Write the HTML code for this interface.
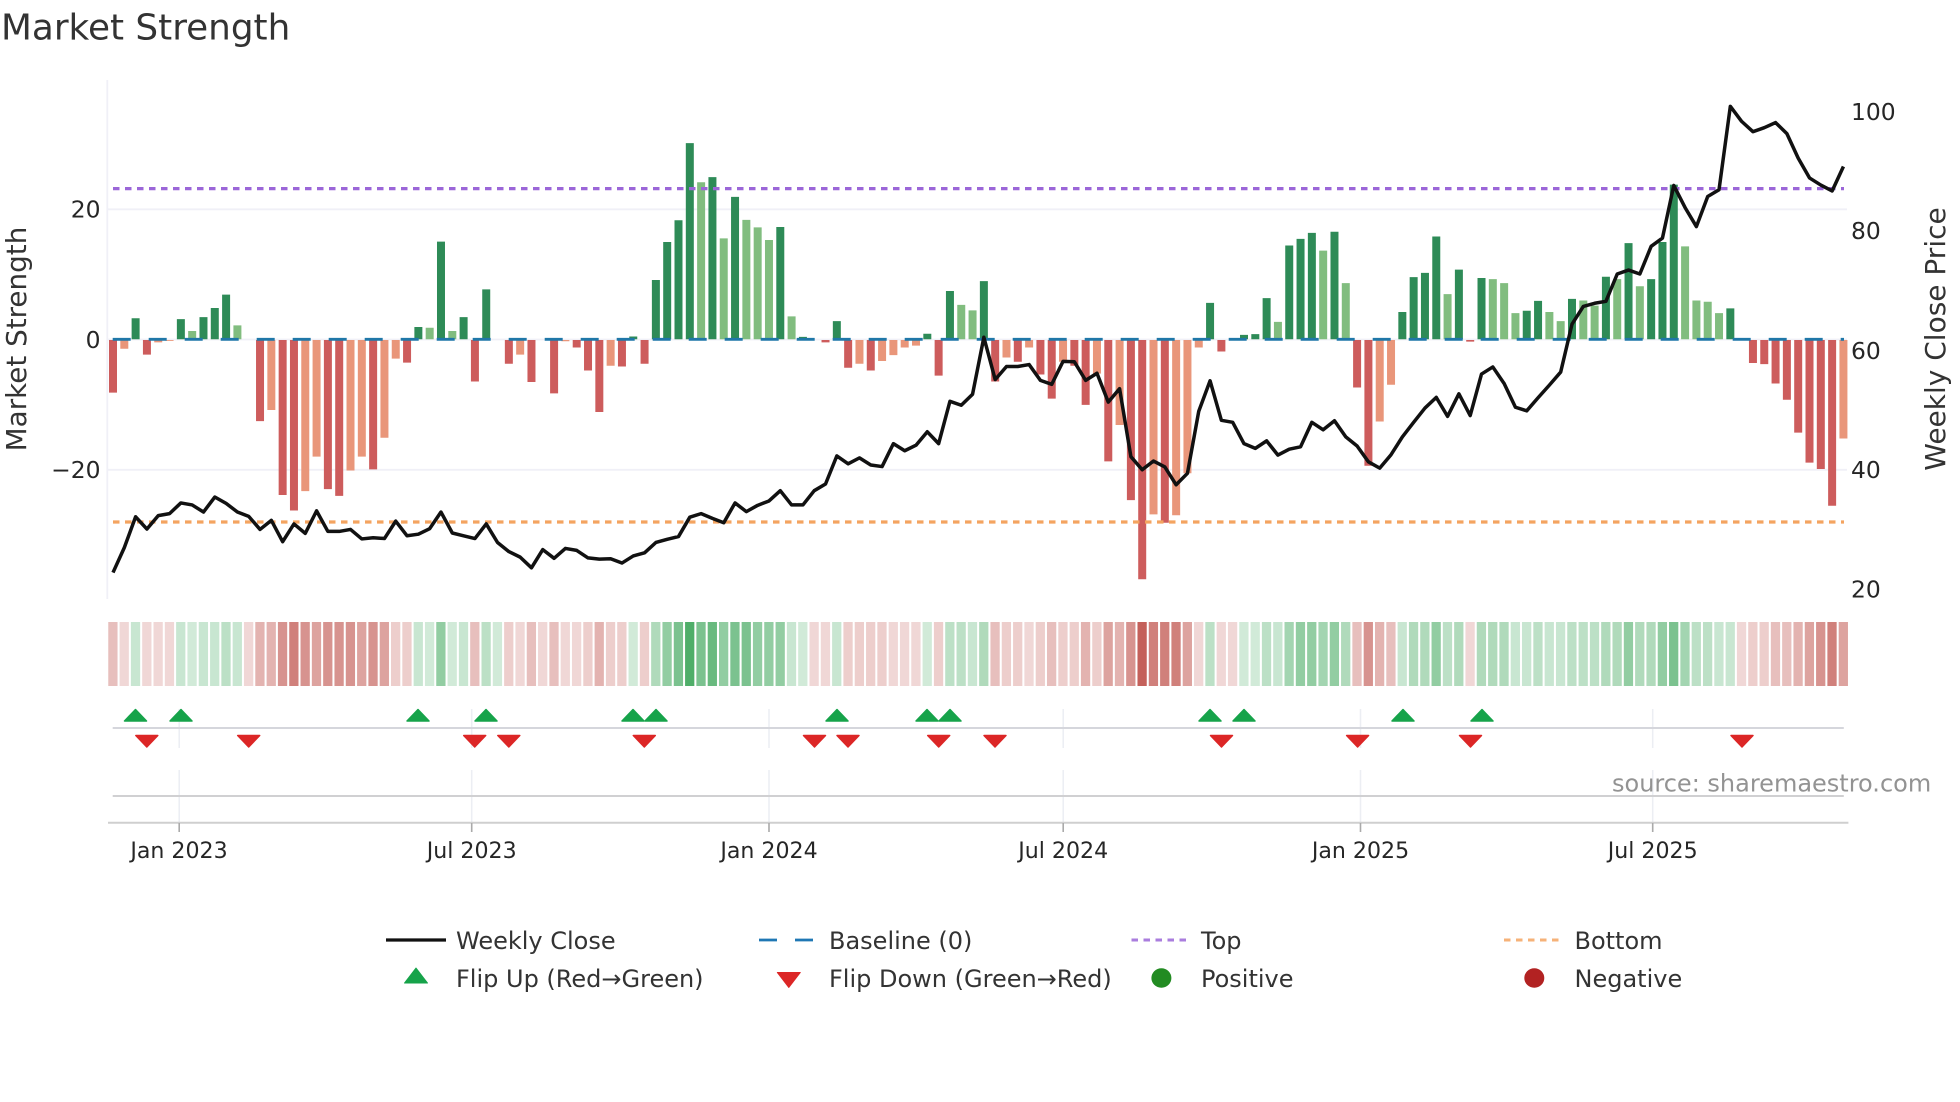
<!DOCTYPE html>
<html lang="en"><head><meta charset="utf-8"><title>Market Strength</title>
<style>
html,body{margin:0;padding:0;background:#fff;width:1960px;height:1102px;overflow:hidden}
svg{display:block}
text{font-family:"DejaVu Sans","Liberation Sans",sans-serif}
</style></head><body>
<svg xmlns="http://www.w3.org/2000/svg" width="1960" height="1102" viewBox="0 0 1960 1102">
<rect width="1960" height="1102" fill="#fff"/>
<text x="1" y="39.5" font-size="35.8" fill="#333">Market Strength</text>

<!-- grid -->
<g stroke="#f0f0f7" stroke-width="1.8" fill="none">
<path d="M107.3 80V599"/>
<path d="M107 209.3H1847M107 339.5H1847M107 469.8H1847"/>
</g>

<!-- bars -->
<g transform="translate(113 0) scale(11.31 .3954)" fill="none" stroke-width=".707">
<path stroke="#2e8b57" d="M2 858V805M6 858V807M8 858V802M9 858V779M10 858V745M27 858V827M29 858V611M31 858V802M33 858V732M46 858V851M48 858V708M49 858V612M50 858V557M51 858V362M53 858V448M55 858V498M59 858V574M61 858V852M64 858V812M72 858V844M74 858V736M77 858V711M97 858V766M100 858V847M101 858V845M102 858V754M104 858V621M105 858V604M106 858V589M108 858V586M114 858V789M115 858V701M116 858V690M117 858V598M119 858V682M121 858V703M125 858V786M126 858V761M129 858V756M132 858V700M134 858V615M136 858V706M137 858V612M138 858V467M143 858V780"/>
<path stroke="#81bd7f" d="M7 858V837M11 858V823M28 858V829M30 858V837M52 858V461M54 858V603M56 858V556M57 858V575M58 858V607M60 858V800M75 858V771M76 858V785M103 858V814M107 858V634M109 858V716M118 858V744M122 858V706M123 858V716M124 858V792M127 858V789M128 858V812M130 858V760M131 858V773M133 858V706M135 858V724M139 858V623M140 858V760M141 858V763M142 858V792"/>
<path stroke="#cd5c5c" d="M0 860V993M3 860V897M13 860V1065M15 860V1252M16 860V1291M19 860V1237M20 860V1254M23 860V1187M26 860V917M32 860V965M35 860V920M37 860V966M39 860V995M41 860V879M42 860V937M43 860V1042M45 860V927M47 860V920M63 860V866M65 860V930M67 860V937M73 860V950M78 860V965M80 860V915M82 860V947M83 860V1008M85 860V925M86 860V1024M88 860V1167M90 860V1265M91 860V1465M93 860V1322M98 860V889M110 860V980M111 860V1178M120 860V864M145 860V918M146 860V921M147 860V970M148 860V1011M149 860V1094M150 860V1170M151 860V1186M152 860V1279"/>
<path stroke="#e9967a" d="M1 860V882M4 860V866M5 860V862M14 860V1037M17 860V1242M18 860V1155M21 860V1190M22 860V1155M24 860V1107M25 860V907M36 860V897M40 860V863M44 860V925M66 860V920M68 860V913M69 860V898M70 860V879M71 860V874M79 860V904M81 860V879M84 860V915M87 860V945M89 860V1075M92 860V1301M94 860V1303M95 860V1197M96 860V879M112 860V1066M113 860V973M153 860V1109"/>
</g>

<!-- baseline / top / bottom -->
<path d="M112.7 339.3H1844" stroke="#1f77a8" stroke-width="2.8" stroke-dasharray="18 18" fill="none"/>
<path d="M113 188.6H1844" stroke="#9b66d8" stroke-width="3.2" stroke-dasharray="6.5 5.5" fill="none"/>
<path d="M113 522H1844" stroke="#f4a460" stroke-width="3.2" stroke-dasharray="6.5 5.5" fill="none"/>

<!-- price line -->
<g transform="translate(113 0) scale(11.31 .3954)">
<polyline fill="none" stroke="#111" stroke-width="3.5" stroke-linejoin="round" vector-effect="non-scaling-stroke" points="0,1448 1,1385 2,1307 3,1338 4,1304 5,1299 6,1272 7,1277 8,1295 9,1257 10,1273 11,1295 12,1306 13,1339 14,1316 15,1370 16,1325 17,1349 18,1292 19,1344 20,1344 21,1339 22,1363 23,1360 24,1362 25,1318 26,1355 27,1351 28,1337 29,1295 30,1348 31,1355 32,1362 33,1325 34,1372 35,1395 36,1409 37,1436 38,1390 39,1412 40,1387 41,1392 42,1411 43,1414 44,1413 45,1424 46,1406 47,1398 48,1372 49,1364 50,1357 51,1308 52,1299 53,1311 54,1322 55,1272 56,1294 57,1278 58,1267 59,1241 60,1277 61,1277 62,1241 63,1224 64,1153 65,1173 66,1158 67,1176 68,1180 69,1122 70,1140 71,1126 72,1092 73,1122 74,1015 75,1025 76,997 77,853 78,960 79,927 80,927 81,922 82,962 83,972 84,914 85,915 86,962 87,944 88,1017 89,983 90,1155 91,1188 92,1166 93,1181 94,1226 95,1197 96,1040 97,963 98,1063 99,1068 100,1122 101,1134 102,1115 103,1151 104,1136 105,1130 106,1068 107,1087 108,1064 109,1105 110,1128 111,1168 112,1184 113,1150 114,1105 115,1068 116,1032 117,1005 118,1053 119,996 120,1051 121,946 122,928 123,970 124,1030 125,1039 126,1006 127,974 128,941 129,820 130,775 131,767 132,762 133,693 134,683 135,693 136,623 137,602 138,469 139,525 140,573 141,497 142,480 143,269 144,307 145,333 146,323 147,310 148,338 149,400 150,450 151,468 152,483 153,421"/>
</g>

<!-- axis labels -->
<g font-size="23.4" fill="#262626">
<text x="100.5" y="217.6" text-anchor="end">20</text>
<text x="100.5" y="347.9" text-anchor="end">0</text>
<text x="100.5" y="478.2" text-anchor="end">−20</text>
<text x="1851" y="119.8">100</text>
<text x="1851" y="238.8">80</text>
<text x="1851" y="359">60</text>
<text x="1851" y="478.1">40</text>
<text x="1851" y="597.3">20</text>
</g>
<text transform="translate(26 339) rotate(-90)" text-anchor="middle" font-size="27.8" fill="#333">Market Strength</text>
<text transform="translate(1945 339) rotate(-90)" text-anchor="middle" font-size="28" fill="#333">Weekly Close Price</text>

<!-- heat strip -->
<g transform="translate(112.9 0) scale(11.31 1)" fill="none" stroke-width=".82">
<path stroke="#c4605a" stroke-opacity=".25" d="M1 622v64M3 622v64M4 622v64M5 622v64M12 622v64M36 622v64M38 622v64M40 622v64M41 622v64M62 622v64M63 622v64M69 622v64M70 622v64M71 622v64M81 622v64M96 622v64M98 622v64M99 622v64M120 622v64M144 622v64"/>
<path stroke="#c4605a" stroke-opacity=".31" d="M25 622v64M26 622v64M35 622v64M42 622v64M44 622v64M45 622v64M47 622v64M65 622v64M66 622v64M67 622v64M68 622v64M73 622v64M79 622v64M80 622v64M82 622v64M84 622v64M85 622v64M87 622v64M145 622v64M146 622v64"/>
<path stroke="#c4605a" stroke-opacity=".4" d="M0 622v64M32 622v64M37 622v64M39 622v64M78 622v64M83 622v64M110 622v64M113 622v64M147 622v64M148 622v64"/>
<path stroke="#c4605a" stroke-opacity=".48" d="M13 622v64M14 622v64M43 622v64M86 622v64M89 622v64M112 622v64M149 622v64"/>
<path stroke="#c4605a" stroke-opacity=".58" d="M18 622v64M22 622v64M24 622v64M88 622v64M95 622v64M150 622v64M153 622v64"/>
<path stroke="#c4605a" stroke-opacity=".68" d="M15 622v64M17 622v64M19 622v64M20 622v64M21 622v64M23 622v64M90 622v64M111 622v64M151 622v64"/>
<path stroke="#c4605a" stroke-opacity=".8" d="M16 622v64M92 622v64M93 622v64M94 622v64M152 622v64"/>
<path stroke="#c4605a" d="M91 622v64"/>
<path stroke="#4fae69" stroke-opacity=".26" d="M7 622v64M28 622v64M30 622v64M34 622v64M46 622v64M61 622v64M72 622v64M100 622v64M101 622v64"/>
<path stroke="#4fae69" stroke-opacity=".31" d="M2 622v64M6 622v64M8 622v64M9 622v64M11 622v64M27 622v64M31 622v64M60 622v64M64 622v64M76 622v64M103 622v64M114 622v64M124 622v64M125 622v64M127 622v64M128 622v64M142 622v64M143 622v64"/>
<path stroke="#4fae69" stroke-opacity=".38" d="M10 622v64M33 622v64M74 622v64M75 622v64M97 622v64M102 622v64M118 622v64M126 622v64M129 622v64M130 622v64M131 622v64M140 622v64M141 622v64"/>
<path stroke="#4fae69" stroke-opacity=".45" d="M48 622v64M77 622v64M109 622v64M115 622v64M116 622v64M119 622v64M121 622v64M122 622v64M123 622v64M132 622v64M133 622v64M135 622v64M136 622v64"/>
<path stroke="#4fae69" stroke-opacity=".52" d="M104 622v64M107 622v64M139 622v64"/>
<path stroke="#4fae69" stroke-opacity=".62" d="M29 622v64M49 622v64M54 622v64M57 622v64M58 622v64M59 622v64M105 622v64M106 622v64M108 622v64M117 622v64M134 622v64M137 622v64"/>
<path stroke="#4fae69" stroke-opacity=".75" d="M50 622v64M52 622v64M55 622v64M56 622v64M138 622v64"/>
<path stroke="#4fae69" stroke-opacity=".85" d="M53 622v64"/>
<path stroke="#4fae69" d="M51 622v64"/>
</g>

<!-- lower panels -->
<g stroke="#eceef3" stroke-width="1.5" fill="none">
<path d="M179.2 709V748M471.7 709V748M769 709V748M1063.2 709V748M1360.5 709V748M1652.7 709V748"/>
<path d="M179.2 770V822M471.7 770V822M769 770V822M1063.2 770V822M1360.5 770V822M1652.7 770V822"/>
</g>
<path d="M112.7 728H1843.8" stroke="#d5d6dc" stroke-width="2" fill="none"/>
<path d="M112.7 796H1843.8" stroke="#d0d0d2" stroke-width="2" fill="none"/>
<path d="M108 822.7H1848.4" stroke="#cfcfcf" stroke-width="2" fill="none"/>
<path d="M179.2 823V832M471.7 823V832M769 823V832M1063.2 823V832M1360.5 823V832M1652.7 823V832" stroke="#aaa" stroke-width="1.6" fill="none"/>

<!-- flip up -->
<g fill="#16a34a" stroke="#16a34a" stroke-width="1.5" stroke-linejoin="round">
<polygon points="135.5,709.5 124.5,721 146.5,721"/>
<polygon points="181,709.5 170,721 192,721"/>
<polygon points="418,709.5 407,721 429,721"/>
<polygon points="486,709.5 475,721 497,721"/>
<polygon points="633,709.5 622,721 644,721"/>
<polygon points="656,709.5 645,721 667,721"/>
<polygon points="837,709.5 826,721 848,721"/>
<polygon points="927,709.5 916,721 938,721"/>
<polygon points="950,709.5 939,721 961,721"/>
<polygon points="1210,709.5 1199,721 1221,721"/>
<polygon points="1244,709.5 1233,721 1255,721"/>
<polygon points="1403,709.5 1392,721 1414,721"/>
<polygon points="1482,709.5 1471,721 1493,721"/>
</g>
<!-- flip down -->
<g fill="#dc2626" stroke="#dc2626" stroke-width="1.5" stroke-linejoin="round">
<polygon points="146.8,747 135.8,735.5 157.8,735.5"/>
<polygon points="248.7,747 237.7,735.5 259.7,735.5"/>
<polygon points="474.7,747 463.7,735.5 485.7,735.5"/>
<polygon points="508.8,747 497.8,735.5 519.8,735.5"/>
<polygon points="644.3,747 633.3,735.5 655.3,735.5"/>
<polygon points="814.5,747 803.5,735.5 825.5,735.5"/>
<polygon points="848,747 837,735.5 859,735.5"/>
<polygon points="938.7,747 927.7,735.5 949.7,735.5"/>
<polygon points="995,747 984,735.5 1006,735.5"/>
<polygon points="1221.5,747 1210.5,735.5 1232.5,735.5"/>
<polygon points="1357.6,747 1346.6,735.5 1368.6,735.5"/>
<polygon points="1470.5,747 1459.5,735.5 1481.5,735.5"/>
<polygon points="1742,747 1731,735.5 1753,735.5"/>
</g>

<!-- x labels -->
<g font-size="22.1" fill="#262626" text-anchor="middle">
<text x="179" y="858">Jan 2023</text>
<text x="471.7" y="858">Jul 2023</text>
<text x="769" y="858">Jan 2024</text>
<text x="1063.2" y="858">Jul 2024</text>
<text x="1360.5" y="858">Jan 2025</text>
<text x="1652.7" y="858">Jul 2025</text>
</g>
<text x="1612" y="791.5" font-size="24" fill="#939393">source: sharemaestro.com</text>

<!-- legend -->
<path d="M386 940H446" stroke="#111" stroke-width="3.2" fill="none"/>
<path d="M759 940H813" stroke="#1f77b4" stroke-width="2.8" stroke-dasharray="18 18" fill="none"/>
<path d="M1131.5 940H1186" stroke="#9b66d8" stroke-width="3" stroke-dasharray="6.5 5.5" fill="none" opacity=".85"/>
<path d="M1504 940H1558.7" stroke="#f4a460" stroke-width="3" stroke-dasharray="6.5 5.5" fill="none" opacity=".85"/>
<polygon points="416,968 404.5,983 427.5,983" fill="#16a34a" stroke="#16a34a" stroke-width="1" stroke-linejoin="round"/>
<polygon points="788.8,987.5 777.3,972.5 800.3,972.5" fill="#dc2626" stroke="#dc2626" stroke-width="1" stroke-linejoin="round"/>
<ellipse cx="1161.4" cy="978" rx="10" ry="9.8" fill="#228b22"/>
<ellipse cx="1534.3" cy="978" rx="10" ry="9.8" fill="#b22222"/>
<g font-size="24" fill="#333">
<text x="456" y="949">Weekly Close</text>
<text x="829" y="949">Baseline (0)</text>
<text x="1201" y="949">Top</text>
<text x="1574.5" y="949">Bottom</text>
<text x="456" y="987">Flip Up (Red→Green)</text>
<text x="829" y="987">Flip Down (Green→Red)</text>
<text x="1201" y="987">Positive</text>
<text x="1574.5" y="987">Negative</text>
</g>
</svg>
</body></html>
